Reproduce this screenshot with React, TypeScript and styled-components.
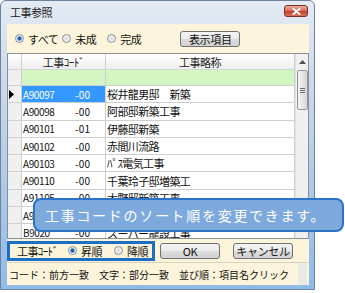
import styled, { createGlobalStyle } from "styled-components";

const GlobalStyle = createGlobalStyle`
  body {
    margin: 0;
    background: #ffffff;
    font-family: "Noto Sans CJK JP", "Noto Sans", sans-serif;
  }
`;

const Page = styled.div`
  position: relative;
  width: 345px;
  height: 293px;
  overflow: hidden;
`;

const Window = styled.div`
  box-sizing: border-box;
  width: 315px;
  height: 290px;
  border: 1px solid #6b819e;
  border-radius: 6px 6px 0 0;
  background: linear-gradient(
    to bottom,
    #e4ebf4 0%,
    #cfdbea 25%,
    #b3cbe6 60%,
    #8fbbe8 100%
  );
  padding: 0 5px 4px 6px;
  display: flex;
  flex-direction: column;
`;

const TitleBar = styled.div`
  height: 23px;
  display: flex;
  align-items: center;
  justify-content: space-between;
  padding: 0 0 0 3px;
`;

const Title = styled.span`
  font-size: 11px;
  color: #1a1a1a;
  letter-spacing: -0.5px;
  margin-top: -1px;
`;

const CloseButton = styled.div`
  box-sizing: border-box;
  width: 24px;
  height: 12px;
  margin-right: 1px;
  margin-top: -3px;
  border: 1px solid #7c3128;
  border-radius: 3px;
  background: linear-gradient(to bottom, #eab0a2 0%, #d6735f 45%, #c0412c 55%, #d7705a 100%);
  display: flex;
  align-items: center;
  justify-content: center;
`;

const Client = styled.div`
  flex: 1;
  background: #fcf5dc;
  display: flex;
  flex-direction: column;
  font-size: 11px;
  color: #111;
`;

const FilterRow = styled.div`
  height: 29px;
  display: flex;
  align-items: center;
  padding-left: 8px;
`;

const RadioItem = styled.label<{ $gap?: number }>`
  display: flex;
  align-items: center;
  gap: 4px;
  margin-right: ${(p) => p.$gap ?? 0}px;
  letter-spacing: -0.5px;
  white-space: nowrap;
`;

const Radio = styled.span<{ $checked?: boolean }>`
  box-sizing: border-box;
  flex-shrink: 0;
  width: 9px;
  height: 9px;
  border-radius: 50%;
  border: 1px solid #8b8f96;
  background: ${(p) =>
    p.$checked
      ? "radial-gradient(circle, #1d4f9c 0%, #2f6cc0 35%, #8fbce9 45%, #f2f2f2 60%, #dcdcdc 100%)"
      : "radial-gradient(circle, #dedede 0%, #eaeaea 45%, #f7f7f7 100%)"};
`;

const Button = styled.div<{ $width: number }>`
  box-sizing: border-box;
  width: ${(p) => p.$width}px;
  height: 16px;
  border: 1px solid #707070;
  border-radius: 3px;
  background: linear-gradient(to bottom, #f4f4f4 0%, #ebebeb 50%, #dcdcdc 51%, #d2d2d2 100%);
  display: flex;
  align-items: center;
  justify-content: center;
  font-size: 11px;
  letter-spacing: -0.3px;
  color: #111;
`;

const Grid = styled.div`
  box-sizing: border-box;
  height: 186px;
  border: 1px solid #8a9099;
  background: #ffffff;
  display: flex;
  overflow: hidden;
`;

const Table = styled.div`
  flex: 1;
  display: flex;
  flex-direction: column;
`;

const Row = styled.div<{ $height: number }>`
  display: flex;
  height: ${(p) => p.$height}px;
  flex-shrink: 0;
`;

const Cell = styled.div<{ $width?: number; $bg?: string; $color?: string; $center?: boolean }>`
  box-sizing: border-box;
  ${(p) => (p.$width ? `width: ${p.$width}px;` : "flex: 1;")}
  border-right: 1px solid #cfcfcf;
  border-bottom: 1px solid #cfcfcf;
  background: ${(p) => p.$bg ?? "#ffffff"};
  color: ${(p) => p.$color ?? "#111"};
  display: flex;
  align-items: center;
  justify-content: ${(p) => (p.$center ? "center" : "flex-start")};
  padding-left: ${(p) => (p.$center ? 0 : 1)}px;
  white-space: nowrap;
  overflow: hidden;
`;

const HeaderCell = styled(Cell)`
  background: linear-gradient(to bottom, #ffffff 0%, #f7f7f7 50%, #ededed 100%);
  border-bottom: 1px solid #d5d5d5;
  color: #222;
  letter-spacing: -0.5px;
`;

const Code = styled.span`
  width: 52px;
  font-size: 10px;
  letter-spacing: -0.4px;
`;

const Branch = styled.span`
  font-size: 10px;
  letter-spacing: 0.3px;
`;

const Name = styled.span`
  font-size: 11px;
  letter-spacing: -0.6px;
`;

const Scrollbar = styled.div`
  box-sizing: border-box;
  width: 13px;
  background: #f0f0f0;
  border-left: 1px solid #e2e2e2;
  display: flex;
  flex-direction: column;
  align-items: center;
`;

const ScrollArrow = styled.div`
  height: 16px;
  display: flex;
  align-items: center;
  justify-content: center;
`;

const Thumb = styled.div`
  box-sizing: border-box;
  width: 11px;
  height: 40px;
  border: 1px solid #979797;
  border-radius: 2px;
  background: linear-gradient(to right, #f3f3f3 0%, #e6e6e6 50%, #d6d6d6 100%);
  display: flex;
  flex-direction: column;
  align-items: center;
  justify-content: center;
  gap: 1px;
`;

const Grip = styled.span`
  width: 5px;
  height: 1px;
  background: #6f6f6f;
`;

const BottomBar = styled.div`
  height: 23px;
  display: flex;
  align-items: center;
`;

const SortBox = styled.div`
  box-sizing: border-box;
  width: 148px;
  height: 20px;
  border: 3px solid #1d6fc6;
  display: flex;
  align-items: center;
  padding-left: 7px;
  overflow: hidden;
`;

const SortLabel = styled.span`
  width: 51px;
  flex-shrink: 0;
  letter-spacing: -0.6px;
  white-space: nowrap;
`;

const ButtonGroup = styled.div`
  display: flex;
  gap: 13px;
  margin-left: 5px;
`;

const StatusBar = styled.div`
  flex: 1;
  border-top: 1px solid #d8d3c0;
  display: flex;
  align-items: center;
  padding-left: 2px;
`;

const StatusText = styled.span`
  flex: 1;
  font-size: 10px;
  letter-spacing: 0px;
  white-space: nowrap;
`;

const SizeGrip = styled.div`
  width: 9px;
  height: 100%;
  background: #ebe9e4;
  margin-right: 2px;
`;

const Balloon = styled.div`
  position: absolute;
  left: 33px;
  top: 198px;
  box-sizing: border-box;
  width: 311px;
  height: 34px;
  border: 2px solid #2a73c6;
  border-radius: 8px;
  background: #7ea9dc;
  color: #ffffff;
  font-size: 14px;
  letter-spacing: 1.7px;
  display: flex;
  align-items: center;
  padding-left: 10px;
  white-space: nowrap;
`;

const rows = [
  { code: "A90097", branch: "-00", name: "桜井龍男邸　新築" },
  { code: "A90098", branch: "-00", name: "阿部邸新築工事" },
  { code: "A90101", branch: "-01", name: "伊藤邸新築" },
  { code: "A90102", branch: "-00", name: "赤間川流路" },
  { code: "A90103", branch: "-00", name: "ﾊﾟｽ電気工事" },
  { code: "A90110", branch: "-00", name: "千葉玲子邸増築工" },
  { code: "A91105", branch: "-00", name: "大野邸新築工事" },
  { code: "A91201", branch: "-00", name: "高橋邸改修工事" },
  { code: "B9020", branch: "-00", name: "スーパー龍設工事" },
];

export default function App() {
  return (
    <Page>
      <GlobalStyle />
      <Window>
        <TitleBar>
          <Title>工事参照</Title>
          <CloseButton>
            <svg width="9" height="7" viewBox="0 0 9 7">
              <path d="M1.5 1 L7.5 6 M7.5 1 L1.5 6" stroke="#ffffff" strokeWidth="2" strokeLinecap="round" />
            </svg>
          </CloseButton>
        </TitleBar>
        <Client>
          <FilterRow>
            <RadioItem $gap={4}>
              <Radio $checked />
              すべて
            </RadioItem>
            <RadioItem $gap={11}>
              <Radio />
              未成
            </RadioItem>
            <RadioItem $gap={39}>
              <Radio />
              完成
            </RadioItem>
            <Button $width={60}>表示項目</Button>
          </FilterRow>
          <Grid>
            <Table>
              <Row $height={16}>
                <HeaderCell $width={14} />
                <HeaderCell $width={84} $center>
                  工事ｺｰﾄﾞ
                </HeaderCell>
                <HeaderCell $center>工事略称</HeaderCell>
              </Row>
              <Row $height={16}>
                <Cell $width={14} $bg="#f0f0f0" />
                <Cell $width={84} $bg="#d3f6c2" />
                <Cell $bg="#d3f6c2" />
              </Row>
              {rows.map((r, i) => (
                <Row key={r.code} $height={17.3}>
                  <Cell $width={14} $bg="#f0f0f0">
                    {i === 0 && (
                      <svg width="6" height="9" viewBox="0 0 6 9">
                        <path d="M0 0 L5 4.5 L0 9 Z" fill="#000" />
                      </svg>
                    )}
                  </Cell>
                  <Cell
                    $width={84}
                    $bg={i === 0 ? "#3399ff" : "#ffffff"}
                    $color={i === 0 ? "#ffffff" : "#111"}
                  >
                    <Code>{r.code}</Code>
                    <Branch>{r.branch}</Branch>
                  </Cell>
                  <Cell>
                    <Name>{r.name}</Name>
                  </Cell>
                </Row>
              ))}
            </Table>
            <Scrollbar>
              <ScrollArrow>
                <svg width="7" height="4" viewBox="0 0 7 4">
                  <path d="M0 4 L3.5 0 L7 4 Z" fill="#4d4d4d" />
                </svg>
              </ScrollArrow>
              <Thumb>
                <Grip />
                <Grip />
                <Grip />
              </Thumb>
            </Scrollbar>
          </Grid>
          <BottomBar>
            <SortBox>
              <SortLabel>工事ｺｰﾄﾞ</SortLabel>
              <RadioItem $gap={12}>
                <Radio $checked />
                昇順
              </RadioItem>
              <RadioItem>
                <Radio />
                降順
              </RadioItem>
            </SortBox>
            <ButtonGroup>
              <Button $width={60}>OK</Button>
              <Button $width={60}>キャンセル</Button>
            </ButtonGroup>
          </BottomBar>
          <StatusBar>
            <StatusText>コード：前方一致　文字：部分一致　並び順：項目名クリック</StatusText>
            <SizeGrip />
          </StatusBar>
        </Client>
      </Window>
      <Balloon>工事コードのソート順を変更できます。</Balloon>
    </Page>
  );
}
